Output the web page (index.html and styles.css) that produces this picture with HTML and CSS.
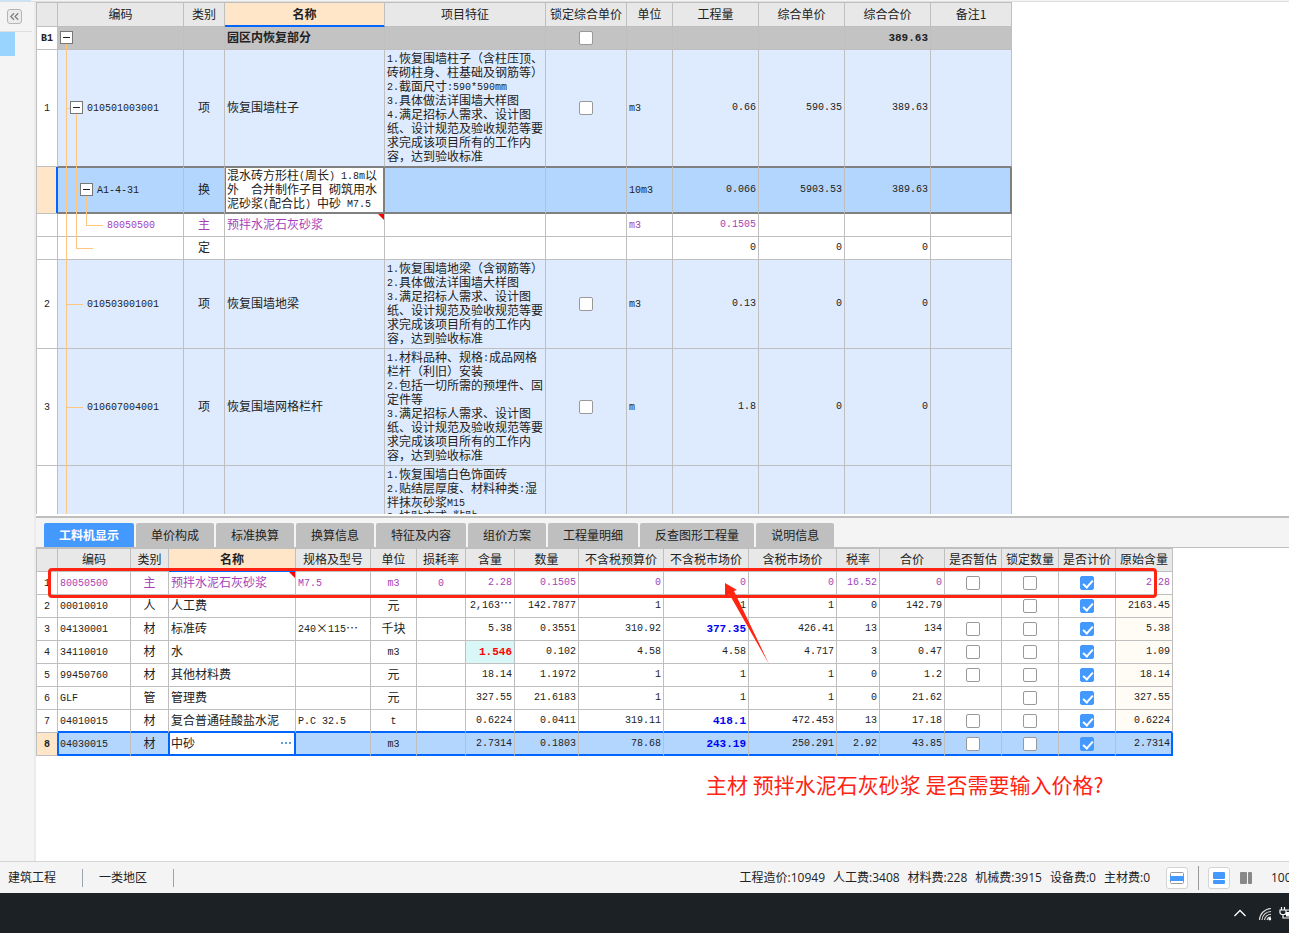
FILE: index.html
```html
<!DOCTYPE html>
<html lang="zh-CN">
<head>
<meta charset="utf-8">
<title>工程计价</title>
<link rel="stylesheet" href="styles.css">
</head>
<body>
<div class="topstrip"><div class="topstrip-tab"></div></div>
<div class="workspace">
  <aside class="sidebar">
    <div class="sidebar-head">
      <button class="collapse" type="button" aria-label="收起"><svg viewBox="0 0 14 14" width="13" height="13"><path d="M6.5 3.5L3 7l3.5 3.5M11 3.5L7.500 7l3.500 3.500" fill="none" stroke="#777" stroke-width="1.200"/></svg></button>
    </div>
    <div class="sidebar-item"></div>
  </aside>
  <main class="content">
    <section class="bill-pane">
      <table class="grid bill">
        <colgroup><col class="w21"><col class="w126"><col class="w41"><col class="w160"><col class="w161"><col class="w81"><col class="w46"><col class="w86"><col class="w86"><col class="w86"><col class="w81"></colgroup>
        <thead>
          <tr><th></th><th>编码</th><th>类别</th><th class="current">名称</th><th>项目特征</th><th>锁定综合单价</th><th>单位</th><th>工程量</th><th>综合单价</th><th>综合合价</th><th>备注1</th></tr>
        </thead>
        <tbody>
          <tr class="section"><td class="rowno"><span class="n">B1</span></td><td class="code"><span class="box l0"></span><span class="guide g1 lower"></span></td><td></td><td>园区内恢复部分</td><td></td><td class="mid"><input type="checkbox" aria-label="锁定综合单价 B1"></td><td></td><td></td><td></td><td class="num strong">389.63</td><td></td></tr>
          <tr class="item above"><td class="rowno"><span class="n">1</span></td><td class="code lv1"><span class="guide g1"></span><span class="tick t1 short"></span><span class="box l1"></span><span class="guide g2 lower"></span><span class="n">010501003001</span></td><td class="mid">项</td><td>恢复围墙柱子</td><td><span class="n">1.</span>恢复围墙柱子（含柱压顶、<br>砖砌柱身、柱基础及钢筋等）<br><span class="n">2.</span>截面尺寸<span class="n">:590*590mm</span><br><span class="n">3.</span>具体做法详围墙大样图<br><span class="n">4.</span>满足招标人需求、设计图<br>纸、设计规范及验收规范等要<br>求完成该项目所有的工作内<br>容，达到验收标准</td><td class="mid"><input type="checkbox" aria-label="锁定综合单价 1"></td><td><span class="n">m3</span></td><td class="num">0.66</td><td class="num">590.35</td><td class="num">389.63</td><td></td></tr>
          <tr class="picked"><td class="rowno"></td><td class="code lv2"><span class="guide g1"></span><span class="guide g2"></span><span class="tick t2 short"></span><span class="box l2"></span><span class="guide g3 lower"></span><span class="n">A1-4-31</span></td><td class="mid">换</td><td class="edit">混水砖方形柱<span class="n">(</span>周长<span class="n">) 1.8m</span>以<br>外<span class="n">  </span>合并制作子目<span class="n"> </span>砌筑用水<br>泥砂浆<span class="n">(</span>配合比<span class="n">) </span>中砂<span class="n"> M7.5</span></td><td></td><td></td><td><span class="n">10m3</span></td><td class="num">0.066</td><td class="num">5903.53</td><td class="num">389.63</td><td></td></tr>
          <tr class="material"><td class="rowno"></td><td class="code lv3"><span class="guide g1"></span><span class="guide g2"></span><span class="guide g3 upper"></span><span class="tick t3"></span><span class="n">80050500</span></td><td class="mid">主</td><td class="flagged">预拌水泥石灰砂浆</td><td></td><td></td><td><span class="n">m3</span></td><td class="num">0.1505</td><td></td><td></td><td></td></tr>
          <tr><td class="rowno"></td><td class="code"><span class="guide g1"></span><span class="guide g2 upper"></span><span class="tick t2"></span></td><td class="mid">定</td><td></td><td></td><td></td><td></td><td class="num">0</td><td class="num">0</td><td class="num">0</td><td></td></tr>
          <tr class="item"><td class="rowno"><span class="n">2</span></td><td class="code lv1"><span class="guide g1"></span><span class="tick t1"></span><span class="n">010503001001</span></td><td class="mid">项</td><td>恢复围墙地梁</td><td><span class="n">1.</span>恢复围墙地梁（含钢筋等）<br><span class="n">2.</span>具体做法详围墙大样图<br><span class="n">3.</span>满足招标人需求、设计图<br>纸、设计规范及验收规范等要<br>求完成该项目所有的工作内<br>容，达到验收标准</td><td class="mid"><input type="checkbox" aria-label="锁定综合单价 2"></td><td><span class="n">m3</span></td><td class="num">0.13</td><td class="num">0</td><td class="num">0</td><td></td></tr>
          <tr class="item"><td class="rowno"><span class="n">3</span></td><td class="code lv1"><span class="guide g1"></span><span class="tick t1"></span><span class="n">010607004001</span></td><td class="mid">项</td><td>恢复围墙网格栏杆</td><td><span class="n">1.</span>材料品种、规格<span class="n">:</span>成品网格<br>栏杆（利旧）安装<br><span class="n">2.</span>包括一切所需的预埋件、固<br>定件等<br><span class="n">3.</span>满足招标人需求、设计图<br>纸、设计规范及验收规范等要<br>求完成该项目所有的工作内<br>容，达到验收标准</td><td class="mid"><input type="checkbox" aria-label="锁定综合单价 3"></td><td><span class="n">m</span></td><td class="num">1.8</td><td class="num">0</td><td class="num">0</td><td></td></tr>
          <tr class="item"><td class="rowno"></td><td class="code lv1"><span class="guide g1"></span></td><td></td><td></td><td><span class="n">1.</span>恢复围墙白色饰面砖<br><span class="n">2.</span>贴结层厚度、材料种类<span class="n">:</span>湿<br>拌抹灰砂浆<span class="n">M15</span><br><span class="n">3.</span>挂贴方式<span class="n">:</span>粘贴</td><td></td><td></td><td></td><td></td><td></td><td></td></tr>
        </tbody>
      </table>
    </section>
    <section class="detail-pane">
      <div class="tabs" role="tablist">
        <button class="tab active" type="button" role="tab" aria-selected="true">工料机显示</button>
        <button class="tab" type="button" role="tab">单价构成</button>
        <button class="tab" type="button" role="tab">标准换算</button>
        <button class="tab" type="button" role="tab">换算信息</button>
        <button class="tab" type="button" role="tab">特征及内容</button>
        <button class="tab" type="button" role="tab">组价方案</button>
        <button class="tab" type="button" role="tab">工程量明细</button>
        <button class="tab" type="button" role="tab">反查图形工程量</button>
        <button class="tab" type="button" role="tab">说明信息</button>
      </div>
      <table class="grid detail">
        <colgroup><col class="w21"><col class="w73"><col class="w38"><col class="w127"><col class="w75"><col class="w46"><col class="w49"><col class="w49"><col class="w64"><col class="w85"><col class="w85"><col class="w88"><col class="w43"><col class="w65"><col class="w57"><col class="w57"><col class="w57"><col class="w57"></colgroup>
        <thead>
          <tr><th></th><th>编码</th><th>类别</th><th class="current">名称</th><th>规格及型号</th><th>单位</th><th>损耗率</th><th>含量</th><th>数量</th><th>不含税预算价</th><th>不含税市场价</th><th>含税市场价</th><th>税率</th><th>合价</th><th>是否暂估</th><th>锁定数量</th><th>是否计价</th><th>原始含量</th></tr>
        </thead>
        <tbody>
          <tr class="material"><td class="rowno"><span class="n">1</span></td><td><span class="n">80050500</span></td><td class="mid">主</td><td class="flagged">预拌水泥石灰砂浆</td><td><span class="n">M7.5</span></td><td class="mid"><span class="n">m3</span></td><td class="mid"><span class="n">0</span></td><td class="num">2.28</td><td class="num">0.1505</td><td class="num">0</td><td class="num">0</td><td class="num">0</td><td class="num">16.52</td><td class="num">0</td><td class="mid"><input type="checkbox" aria-label="是否暂估 1"></td><td class="mid"><input type="checkbox" aria-label="锁定数量 1"></td><td class="mid"><input type="checkbox" checked aria-label="是否计价 1"></td><td class="num">2.28</td></tr>
          <tr><td class="rowno"><span class="n">2</span></td><td><span class="n">00010010</span></td><td class="mid">人</td><td>人工费</td><td></td><td class="mid">元</td><td></td><td class="num">2,163<span class="dots">…</span></td><td class="num">142.7877</td><td class="num">1</td><td class="num">1</td><td class="num">1</td><td class="num">0</td><td class="num">142.79</td><td></td><td class="mid"><input type="checkbox" aria-label="锁定数量 2"></td><td class="mid"><input type="checkbox" checked aria-label="是否计价 2"></td><td class="num origin">2163.45</td></tr>
          <tr><td class="rowno"><span class="n">3</span></td><td><span class="n">04130001</span></td><td class="mid">材</td><td>标准砖</td><td><span class="n">240</span><span class="dots">×</span><span class="n">115</span><span class="dots">…</span></td><td class="mid">千块</td><td></td><td class="num">5.38</td><td class="num">0.3551</td><td class="num">310.92</td><td class="num strong priced">377.35</td><td class="num">426.41</td><td class="num">13</td><td class="num">134</td><td class="mid"><input type="checkbox" aria-label="是否暂估 3"></td><td class="mid"><input type="checkbox" aria-label="锁定数量 3"></td><td class="mid"><input type="checkbox" checked aria-label="是否计价 3"></td><td class="num origin">5.38</td></tr>
          <tr><td class="rowno"><span class="n">4</span></td><td><span class="n">34110010</span></td><td class="mid">材</td><td>水</td><td></td><td class="mid"><span class="n">m3</span></td><td></td><td class="num strong changed">1.546</td><td class="num">0.102</td><td class="num">4.58</td><td class="num">4.58</td><td class="num">4.717</td><td class="num">3</td><td class="num">0.47</td><td class="mid"><input type="checkbox" aria-label="是否暂估 4"></td><td class="mid"><input type="checkbox" aria-label="锁定数量 4"></td><td class="mid"><input type="checkbox" checked aria-label="是否计价 4"></td><td class="num origin">1.09</td></tr>
          <tr><td class="rowno"><span class="n">5</span></td><td><span class="n">99450760</span></td><td class="mid">材</td><td>其他材料费</td><td></td><td class="mid">元</td><td></td><td class="num">18.14</td><td class="num">1.1972</td><td class="num">1</td><td class="num">1</td><td class="num">1</td><td class="num">0</td><td class="num">1.2</td><td class="mid"><input type="checkbox" aria-label="是否暂估 5"></td><td class="mid"><input type="checkbox" aria-label="锁定数量 5"></td><td class="mid"><input type="checkbox" checked aria-label="是否计价 5"></td><td class="num origin">18.14</td></tr>
          <tr><td class="rowno"><span class="n">6</span></td><td><span class="n">GLF</span></td><td class="mid">管</td><td>管理费</td><td></td><td class="mid">元</td><td></td><td class="num">327.55</td><td class="num">21.6183</td><td class="num">1</td><td class="num">1</td><td class="num">1</td><td class="num">0</td><td class="num">21.62</td><td></td><td class="mid"><input type="checkbox" aria-label="锁定数量 6"></td><td class="mid"><input type="checkbox" checked aria-label="是否计价 6"></td><td class="num origin">327.55</td></tr>
          <tr class="above"><td class="rowno"><span class="n">7</span></td><td><span class="n">04010015</span></td><td class="mid">材</td><td>复合普通硅酸盐水泥</td><td><span class="n">P.C 32.5</span></td><td class="mid"><span class="n">t</span></td><td></td><td class="num">0.6224</td><td class="num">0.0411</td><td class="num">319.11</td><td class="num strong priced">418.1</td><td class="num">472.453</td><td class="num">13</td><td class="num">17.18</td><td class="mid"><input type="checkbox" aria-label="是否暂估 7"></td><td class="mid"><input type="checkbox" aria-label="锁定数量 7"></td><td class="mid"><input type="checkbox" checked aria-label="是否计价 7"></td><td class="num origin">0.6224</td></tr>
          <tr class="picked"><td class="rowno"><span class="n">8</span></td><td class="first"><span class="n">04030015</span></td><td class="mid before-edit">材</td><td class="edit"><div class="editor"><span>中砂</span><button class="more" type="button" aria-label="更多"><i></i><i></i><i></i></button></div></td><td></td><td class="mid"><span class="n">m3</span></td><td></td><td class="num">2.7314</td><td class="num">0.1803</td><td class="num">78.68</td><td class="num strong priced">243.19</td><td class="num">250.291</td><td class="num">2.92</td><td class="num">43.85</td><td class="mid"><input type="checkbox" aria-label="是否暂估 8"></td><td class="mid"><input type="checkbox" aria-label="锁定数量 8"></td><td class="mid"><input type="checkbox" checked aria-label="是否计价 8"></td><td class="num">2.7314</td></tr>
        </tbody>
      </table>
      <div class="mark-box"></div>
      <svg class="mark-arrow" viewBox="0 0 46 84" width="46" height="84"><path d="M1 1L13 8L10 9L45 82L5.500 12.500L1 14Z" fill="#ff2312"/></svg>
      <div class="mark-text">主材 预拌水泥石灰砂浆 是否需要输入价格?</div>
    </section>
  </main>
</div>
<footer class="status">
  <span class="field">建筑工程</span><span class="field">一类地区</span>
  <div class="totals"><span>工程造价:10949</span><span>人工费:3408</span><span>材料费:228</span><span>机械费:3915</span><span>设备费:0</span><span>主材费:0</span></div>
  <button class="view framed" type="button" aria-label="单栏"><svg viewBox="0 0 20 20" width="20" height="20"><rect x="3.500" y="4.500" width="13" height="11" rx="1" fill="#fff" stroke="#999"/><rect x="3" y="8" width="14" height="5" fill="#4499ff"/></svg></button>
  <span class="divider"></span>
  <button class="view framed" type="button" aria-label="上下布局"><svg viewBox="0 0 20 20" width="20" height="20"><rect x="4" y="4" width="12" height="7" rx="1" fill="#4499ff"/><rect x="4" y="12" width="12" height="4" rx="1" fill="#4499ff"/></svg></button>
  <button class="view" type="button" aria-label="左右布局"><svg viewBox="0 0 20 20" width="20" height="20"><rect x="4" y="4" width="7" height="12" rx="1" fill="#888"/><rect x="12" y="4" width="4" height="12" rx="1" fill="#888"/></svg></button>
  <span class="zoom">100%</span>
</footer>
<div class="taskbar">
  <svg class="chevron" viewBox="0 0 14 16" width="14" height="16"><path d="M1.500 11L7 5.500L12.500 11" fill="none" stroke="#fff" stroke-width="1.300"/></svg>
  <svg viewBox="0 0 14 16" width="14" height="16"><g fill="none" stroke="#ddd" stroke-width="1.100"><path d="M1.500 15A12 12 0 0 1 13 3.500"/><path d="M4 15A9 9 0 0 1 13 6.500"/><path d="M6.500 15A6.500 6.500 0 0 1 13 9.300"/><path d="M9 15A4 4 0 0 1 13 12"/></g><circle cx="11.800" cy="14" r="1.400" fill="#fff"/></svg>
  <svg viewBox="0 0 10 16" width="10" height="16"><path d="M2.500 2v3M5.500 2v3M1 5h6v2.500a2 2 0 0 1-2 2H3a2 2 0 0 1-2-2zM4 9v4h6M7.500 5H10" fill="none" stroke="#fff" stroke-width="1.200"/><rect x="7" y="7" width="3" height="4.500" fill="#fff"/></svg>
</div>
</body>
</html>
```
FILE: styles.css
```css
* { box-sizing: border-box; }
body {
  margin: 0;
  height: 100vh;
  display: flex;
  flex-direction: column;
  overflow: hidden;
  background: #fff;
  color: #222;
  font: 12px/14px "Noto Sans CJK SC", sans-serif;
}
button { font: inherit; color: inherit; border: 0; padding: 0; margin: 0; background: none; }

.topstrip { flex: none; height: 2px; background: #f4f4f4; border-bottom: 1px solid #dedede; }
.topstrip-tab { width: 31px; height: 1px; background: #c4e4ff; }
.workspace { flex: 1; min-height: 0; display: flex; }

.sidebar { flex: none; width: 36px; background: #f4f4f4; border-right: 2px solid #ebebeb; }
.sidebar-head { height: 30px; padding: 7px; margin-right: 2px; border-bottom: 1px solid #dedede; }
.collapse { display: flex; width: 15px; height: 15px; border: 1px solid #b5b5b5; border-radius: 3px; background: #ececec; }
.sidebar-item { width: 15px; height: 24px; background: #99d4ff; }

.content { flex: 1; min-width: 0; display: flex; flex-direction: column; }
.bill-pane { flex: 1; min-height: 0; overflow: hidden; border-bottom: 2px solid #fff; }
.detail-pane { flex: none; height: 345px; position: relative; border-top: 2px solid #bfbfbf; }

.grid { table-layout: fixed; border-collapse: separate; border-spacing: 0; border-left: 1px solid #bfbfbf; border-top: 1px solid #bfbfbf; }
.bill { width: 976px; }
.detail { width: 1137px; }
.w21 { width: 21px; } .w38 { width: 38px; } .w41 { width: 41px; } .w43 { width: 43px; }
.w46 { width: 46px; } .w49 { width: 49px; } .w57 { width: 57px; } .w64 { width: 64px; }
.w65 { width: 65px; } .w73 { width: 73px; } .w75 { width: 75px; } .w81 { width: 81px; }
.w85 { width: 85px; } .w86 { width: 86px; } .w88 { width: 88px; } .w126 { width: 126px; }
.w127 { width: 127px; } .w160 { width: 160px; } .w161 { width: 161px; }

.grid th, .grid td { border-right: 1px solid #bfbfbf; border-bottom: 1px solid #bfbfbf; white-space: nowrap; }
.grid th { height: 24px; padding: 0 0 2px; background: #e8e8e8; font-weight: 400; }
.detail th { height: 23px; }
.grid th.current { background: #ffe6c8; font-weight: 700; border-bottom-color: #0066ff; box-shadow: inset 0 -1px #0066ff; }
.grid td { height: 23px; padding: 1px 0 3px 2px; vertical-align: middle; }
.grid td.mid, .grid td.rowno { padding: 0 0 2px; text-align: center; }
.grid td.mid:has(input) { padding: 0; }
.grid td.rowno { background: #fff; }
.n, .grid td.num { font-family: "Liberation Mono", monospace; font-size: 10px; }
.n { line-height: 0; white-space: pre; vertical-align: 1px; }
.grid td.num { padding: 0 2px 0 0; text-align: right; }
.grid td.strong { font-size: 11px; font-weight: 700; }
.dots { font: 12px/0 "Noto Sans CJK SC", sans-serif; }

.item td { background: #deebff; }
.section td { background: #c3c3c3; font-weight: 700; }
.material td { color: #a63fb8; }
.material td.rowno { color: #222; }
.grid td.origin { background: #fffbf5; }
.grid td.priced { color: #0000f0; }
.grid td.changed { color: #f00; background: #d9f7f7; }

.bill .above td { border-bottom-color: #808080; }
.bill .picked td { background: #b3d6ff; border-bottom-color: #808080; box-shadow: inset 0 1px #808080, inset 0 -1px #808080; }
.bill .picked td:last-child { border-right-color: #808080; box-shadow: inset -1px 0 #808080, inset 0 1px #808080, inset 0 -1px #808080; }
.bill .picked td.edit { background: #fff; border-right-color: #808080; box-shadow: inset 1px 1px #808080, inset -1px -1px #808080; }
.grid .picked td.rowno { background: #ffe6c8; font-weight: 700; }
.bill .picked td.rowno { border-right-color: #0066ff; box-shadow: inset -1px 0 #0066ff; border-bottom-color: #bfbfbf; }
.bill .above td.rowno { border-bottom-color: #bfbfbf; }

.detail .above td:not(.rowno) { border-bottom-color: #0066ff; }
.detail .picked td:not(.rowno) { background: #b3d6ff; border-bottom-color: #0066ff; box-shadow: inset 0 -1px #0066ff; }
.detail .picked td.rowno, .detail .picked td.before-edit { border-right-color: #0066ff; }
.detail .picked td.first { box-shadow: inset 1px 0 #0066ff, inset 0 -1px #0066ff; }
.detail .picked td.edit { background: #fff; border-right-color: #0066ff; box-shadow: inset 1px 0 #0066ff, inset -1px -1px #0066ff; }
.detail .picked td:last-child { border-right-color: #0066ff; box-shadow: inset -1px -1px #0066ff; }
.detail .above td:not(.rowno) { box-shadow: inset 0 -1px #0066ff; }
.editor { display: flex; justify-content: space-between; align-items: center; padding-right: 4px; }
.more { display: flex; gap: 2px; }
.more i { width: 2px; height: 2px; background: #5c9fd6; }

.code, .flagged { position: relative; }
.grid td.lv1 { padding-left: 29px; }
.grid td.lv2 { padding-left: 39px; }
.grid td.lv3 { padding-left: 49px; }
.guide { position: absolute; top: 0; bottom: -1px; width: 1px; background: #ffc680; z-index: 1; }
.g1 { left: 8px; }
.g2 { left: 18px; }
.g3 { left: 28px; }
.guide.lower { top: calc(50% + 6px); }
.guide.upper { bottom: 50%; }
.tick { position: absolute; top: 50%; height: 1px; width: 17px; background: #ffc680; }
.t1 { left: 8px; }
.t2 { left: 18px; }
.t3 { left: 28px; }
.tick.short { width: 4px; }
.box { position: absolute; top: calc(50% - 7px); width: 13px; height: 13px; border: 1px solid #777; background: linear-gradient(#222, #222) center / 7px 1px no-repeat #fff; z-index: 2; }
.l0 { left: 2px; }
.l1 { left: 12px; }
.l2 { left: 22px; }
.flagged::after { content: ""; position: absolute; top: 0; right: 0; border-top: 6px solid #f00; border-left: 6px solid transparent; }

input[type="checkbox"] { appearance: none; display: block; position: relative; width: 14px; height: 14px; margin: 0 auto; border: 1px solid #999; border-radius: 2px; background: #fff; }
input[type="checkbox"]:checked { border-color: #4499ff; background: #4499ff; }
input[type="checkbox"]:checked::after { content: ""; position: absolute; left: 4px; top: 1px; width: 4px; height: 8px; border: solid #fff; border-width: 0 2px 2px 0; transform: rotate(42deg); }

.tabs { display: flex; gap: 2px; padding: 5px 8px 0; background: #f4f4f4; border-bottom: 1px solid #bfbfbf; }
.tab { height: 24px; padding: 0 15px; border-radius: 2px 2px 0 0; background: #bfbfbf; }
.tab.active { background: #4499ff; color: #fff; font-weight: 700; }

.mark-box { position: absolute; left: 12px; top: 50px; width: 1109px; height: 30px; border: 3px solid #ff2312; border-radius: 4px; }
.mark-arrow { position: absolute; left: 688px; top: 64px; }
.mark-text { position: absolute; left: 670px; top: 252px; color: #ff2312; font-size: 21px; line-height: 28px; white-space: nowrap; }

.status { flex: none; height: 32px; display: flex; align-items: center; background: #f4f4f4; border-top: 1px solid #d4d4d4; overflow: hidden; white-space: nowrap; font-family: "Open Sans", "Noto Sans CJK SC", sans-serif; }
.field { height: 18px; line-height: 18px; padding: 0 26px 0 8px; border-right: 1px solid #9aa4b0; }
.field + .field { padding-left: 16px; }
.totals { display: flex; gap: 8px; margin-left: auto; }
.view { flex: none; width: 22px; height: 22px; display: flex; align-items: center; justify-content: center; border: 1px solid transparent; border-radius: 3px; }
.view.framed { background: #fff; border-color: #d4d4d4; }
.totals + .view { margin-left: 16px; }
.divider { width: 1px; height: 24px; margin: 0 9px 0 10px; background: #999; }
.view + .view { margin-left: 5px; }
.zoom { width: 18px; margin-left: 14px; }

.taskbar { flex: none; height: 40px; display: flex; align-items: center; justify-content: flex-end; gap: 7px; background: #1c2125; }
.chevron { margin-right: 4px; }
```
